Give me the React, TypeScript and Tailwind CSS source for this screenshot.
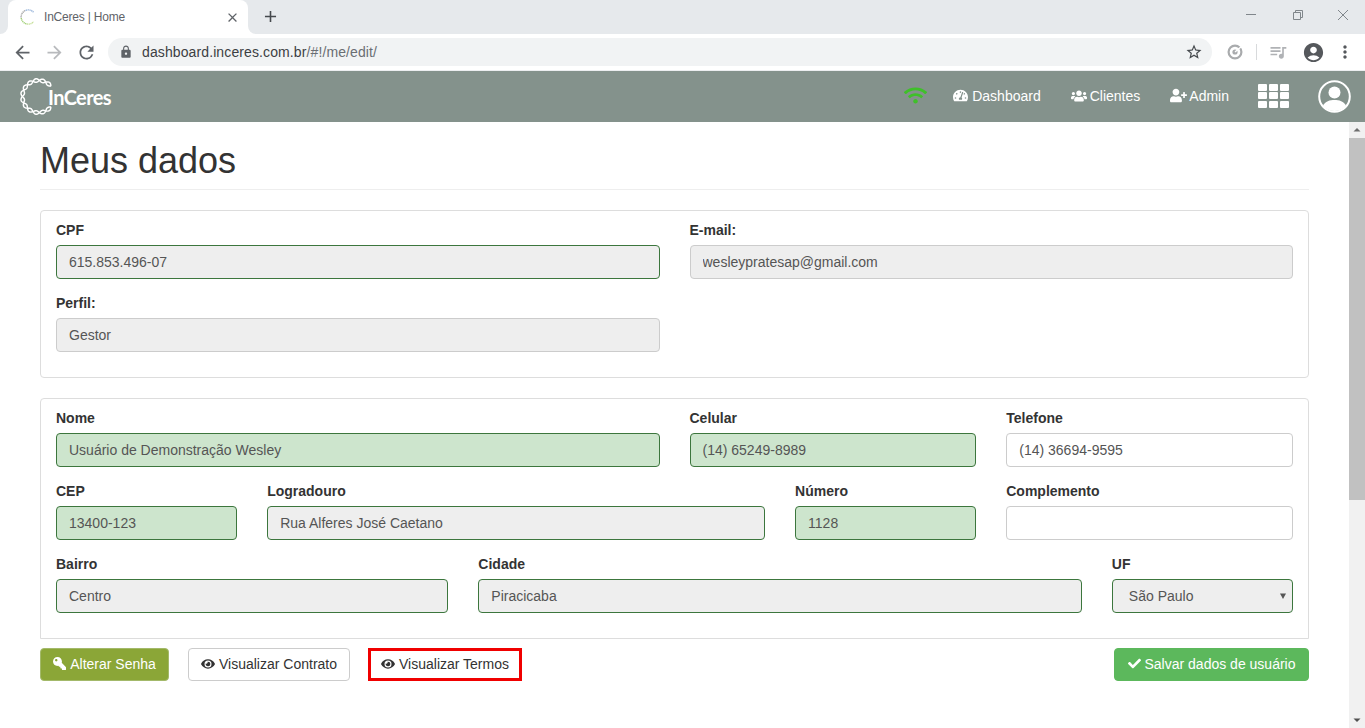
import type { ReactNode } from "react";
import { FaCheck, FaEye, FaKey, FaTachometerAlt, FaUserPlus, FaUsers, FaWifi } from "react-icons/fa";
import {
  MdAccountCircle,
  MdAdd,
  MdArrowBack,
  MdArrowForward,
  MdClose,
  MdLock,
  MdMoreVert,
  MdQueueMusic,
  MdRefresh,
  MdStarBorder,
} from "react-icons/md";

type Variant = "valid" | "validFilled" | "readonly" | "plain";

const inputStyles: Record<Variant, string> = {
  valid: "bg-[#eeeeee] border-[#3c763d]",
  validFilled: "bg-[#cde5cd] border-[#3c763d]",
  readonly: "bg-[#eeeeee] border-[#cccccc]",
  plain: "bg-white border-[#cccccc]",
};

// twisted rope ring of the logo: two sine waves running round an open circle
function ropePath(cx: number, cy: number, r: number, amp: number, phase: number) {
  const points: string[] = [];
  for (let i = 0; i <= 120; i++) {
    const a = ((40 + (280 * i) / 120) * Math.PI) / 180;
    const rr = r + amp * Math.sin((i / 120) * Math.PI * 12 + phase);
    points.push(`${(cx + rr * Math.cos(a)).toFixed(2)} ${(cy - rr * Math.sin(a)).toFixed(2)}`);
  }
  return "M" + points.join("L");
}

function Field({ label, value, variant, span }: { label: string; value: string; variant: Variant; span: string }) {
  return (
    <div className={`${span} mb-[14px]`}>
      <label className="block text-sm leading-5 font-bold text-[#333333] mb-[5px]">{label}</label>
      <input
        readOnly
        value={value}
        className={`block w-full h-[34px] px-3 rounded border text-sm text-[#555555] outline-none ${inputStyles[variant]}`}
      />
    </div>
  );
}

function NavLink({ icon, label, className }: { icon: ReactNode; label: string; className: string }) {
  return (
    <a className={`flex items-center text-sm text-white mt-[-2px] ${className}`}>
      <span className="w-[19px] shrink-0">{icon}</span>
      {label}
    </a>
  );
}

function BrowserChrome() {
  return (
    <div className="bg-white">
      <div className="h-[34px] bg-[#e6e9ec] flex items-end">
        <div className="relative ml-2 w-[240px] h-[34px] bg-white rounded-t-lg flex items-center">
          <div className="absolute bottom-0 -left-2 w-2 h-2 bg-white">
            <div className="w-2 h-2 bg-[#e6e9ec] rounded-br-lg" />
          </div>
          <div className="absolute bottom-0 -right-2 w-2 h-2 bg-white">
            <div className="w-2 h-2 bg-[#e6e9ec] rounded-bl-lg" />
          </div>
          <svg
            viewBox="0 0 18 18"
            className="ml-[11px] w-[18px] h-[18px]"
            fill="none"
            strokeWidth="1.4"
            strokeDasharray="1.2 0.5"
          >
            <path d="M14.5 4.2A7 7 0 0 0 6 2.7" stroke="#9db8dc" />
            <path d="M6 2.7A7 7 0 0 0 2.2 10" stroke="#a8a8a8" />
            <path d="M2.2 10A7 7 0 0 0 8 16" stroke="#9fce74" />
            <path d="M8 16A7 7 0 0 0 14.5 13.8" stroke="#c6e09a" />
          </svg>
          <span className="ml-[7px] text-xs tracking-[-0.2px] text-[#5f6368] flex-1">InCeres | Home</span>
          <MdClose className="mr-[8px] text-[#5f6368]" size={15} />
        </div>
        <MdAdd className="ml-[13px] mb-[8px] text-[#45494d]" size={19} />
        <div className="flex-1" />
        <div className="self-start mt-[9px] flex items-start text-[#80868b]">
          <svg viewBox="0 0 12 12" className="w-3 h-3 mr-[35px]" stroke="currentColor" fill="none">
            <path d="M1 5.5H11" />
          </svg>
          <svg viewBox="0 0 12 12" className="w-3 h-3 mr-[33px]" stroke="currentColor" fill="none">
            <path d="M1.5 3.5H8.5V10.5H1.5ZM3.5 3.5V1.5H10.5V8.5H8.5" />
          </svg>
          <svg viewBox="0 0 12 12" className="w-3 h-3 mr-[16px]" stroke="currentColor" fill="none">
            <path d="M1 1L11 11M11 1L1 11" />
          </svg>
        </div>
      </div>
      <div className="h-[37px] flex items-center border-b border-[#eceef0]">
        <MdArrowBack className="ml-[12px] text-[#5f6368]" size={21} />
        <MdArrowForward className="ml-[11px] text-[#b8babd]" size={21} />
        <MdRefresh className="ml-[11px] text-[#5f6368]" size={21} />
        <div className="ml-[11px] w-[1104px] h-[28px] rounded-full bg-[#f1f3f4] flex items-center">
          <MdLock className="ml-[11px] text-[#5f6368]" size={14} />
          <span className="ml-[9px] text-sm tracking-[0.11px] text-[#3c4043] flex-1">
            dashboard.inceres.com.br<span className="text-[#6a6e73]">/#!/me/edit/</span>
          </span>
          <MdStarBorder className="mr-[9px] text-[#45494d]" size={18} />
        </div>
        <svg viewBox="0 0 16 16" className="ml-[15px] w-4 h-4" fill="none">
          <circle cx="8" cy="8" r="6.4" stroke="#a9abad" strokeWidth="2.2" />
          <circle cx="8" cy="8" r="2.6" fill="#a9abad" />
          <path d="M8 8L15 2" stroke="#ffffff" strokeWidth="1.4" />
        </svg>
        <div className="ml-[13px] w-px h-[16px] bg-[#d8dadc]" />
        <MdQueueMusic className="ml-[11px] text-[#b0b2b5]" size={20} />
        <MdAccountCircle className="ml-[14px] text-[#55585c]" size={23} />
        <MdMoreVert className="ml-[10px] text-[#55585c]" size={20} />
      </div>
    </div>
  );
}

function TopNav() {
  return (
    <nav className="h-[51px] bg-[#84928c] flex items-center">
      <div className="ml-[19px] flex items-center">
        <svg viewBox="0 0 40 40" className="w-[39px] h-[39px]" fill="none" stroke="#ffffff" strokeWidth="1.5">
          <path d={ropePath(20, 20, 16.5, 1.8, 0)} />
          <path d={ropePath(20, 20, 16.5, 1.8, Math.PI)} />
        </svg>
        <span className="-ml-[10px] text-[20px] leading-none font-bold text-white font-['Lato',sans-serif] tracking-[-0.6px]">
          InCeres
        </span>
      </div>
      <div className="flex-1" />
      <FaWifi className="text-[#3fc02a] mt-[-2px]" size={23} />
      <NavLink className="ml-[26px]" icon={<FaTachometerAlt size={15} />} label="Dashboard" />
      <NavLink className="ml-[30px]" icon={<FaUsers size={16} />} label="Clientes" />
      <NavLink className="ml-[30px]" icon={<FaUserPlus size={17} />} label="Admin" />
      <div className="ml-[29px] mt-[-2px] grid grid-cols-3 gap-[1.5px] w-[31px]">
        {Array.from({ length: 9 }).map((_, i) => (
          <div key={i} className="h-[7px] bg-white rounded-[1px]" />
        ))}
      </div>
      <svg viewBox="0 0 33 33" className="ml-[29px] mr-[14px] w-[33px] h-[33px]" fill="none">
        <circle cx="16.5" cy="16.5" r="15.3" stroke="#ffffff" strokeWidth="2" />
        <circle cx="16.5" cy="12.5" r="6" fill="#ffffff" />
        <path d="M5 26C7 21 12 20 16.5 20C21 20 26 21 28 26C25 29.5 21 31 16.5 31C12 31 8 29.5 5 26Z" fill="#ffffff" />
      </svg>
    </nav>
  );
}

function ActionButton({ className, icon, label }: { className: string; icon: ReactNode; label: string }) {
  return (
    <button className={`flex items-center gap-[4px] h-[33px] pb-[2px] rounded border text-sm ${className}`}>
      {icon}
      {label}
    </button>
  );
}

export default function App() {
  return (
    <div className="w-[1365px] h-[728px] overflow-hidden flex flex-col bg-white font-['Liberation_Sans',Arial,sans-serif]">
      <BrowserChrome />
      <TopNav />
      <div className="flex flex-1 min-h-0">
        <main className="flex-1 px-10">
          <div className="h-[68px] border-b border-[#eeeeee] flex items-center">
            <h1 className="mt-[10px] text-[36px] leading-[40px] font-normal text-[#333333]">Meus dados</h1>
          </div>

          <section className="mt-5 border border-[#dddddd] rounded px-[15px] pt-[9px] h-[168px]">
            <div className="grid grid-cols-12 gap-x-[30px]">
              <Field span="col-span-6" label="CPF" value="615.853.496-07" variant="valid" />
              <Field span="col-span-6" label="E-mail:" value="wesleypratesap@gmail.com" variant="readonly" />
              <Field span="col-span-6" label="Perfil:" value="Gestor" variant="readonly" />
            </div>
          </section>

          <section className="mt-5 border border-[#dddddd] rounded-t px-[15px] pt-[9px] h-[241px]">
            <div className="grid grid-cols-12 gap-x-[30px]">
              <Field span="col-span-6" label="Nome" value="Usuário de Demonstração Wesley" variant="validFilled" />
              <Field span="col-span-3" label="Celular" value="(14) 65249-8989" variant="validFilled" />
              <Field span="col-span-3" label="Telefone" value="(14) 36694-9595" variant="plain" />
              <Field span="col-span-2" label="CEP" value="13400-123" variant="validFilled" />
              <Field span="col-span-5" label="Logradouro" value="Rua Alferes José Caetano" variant="valid" />
              <Field span="col-span-2" label="Número" value="1128" variant="validFilled" />
              <Field span="col-span-3" label="Complemento" value="" variant="plain" />
              <Field span="col-span-4" label="Bairro" value="Centro" variant="valid" />
              <Field span="col-span-6" label="Cidade" value="Piracicaba" variant="valid" />
              <div className="col-span-2">
                <label className="block text-sm leading-5 font-bold text-[#333333] mb-[5px]">UF</label>
                <div className="flex items-center justify-between h-[34px] pl-4 pr-[5px] rounded border bg-[#eeeeee] border-[#3c763d] text-sm text-[#555555]">
                  São Paulo
                  <svg viewBox="0 0 8 8" className="w-2 h-2" fill="#555555">
                    <path d="M1 1.5H7L4 7Z" />
                  </svg>
                </div>
              </div>
            </div>
          </section>

          <div className="mt-[9px] flex items-center">
            <ActionButton
              className="w-[129px] justify-center bg-[#8ba637] border-[#a3b96a] text-white"
              icon={<FaKey size={13} className="scale-x-[-1]" />}
              label="Alterar Senha"
            />
            <ActionButton
              className="ml-[19px] w-[162px] justify-center bg-white border-[#cccccc] text-[#333333]"
              icon={<FaEye size={14} />}
              label="Visualizar Contrato"
            />
            <ActionButton
              className="ml-[18px] w-[154px] justify-center bg-white border-[#cccccc] text-[#333333] outline-[3px] outline-offset-[-3px] outline-[#f00000] rounded-none"
              icon={<FaEye size={14} />}
              label="Visualizar Termos"
            />
            <div className="flex-1" />
            <ActionButton
              className="w-[195px] justify-center bg-[#5cb85c] border-[#5cb85c] text-white"
              icon={<FaCheck size={13} />}
              label="Salvar dados de usuário"
            />
          </div>
        </main>

        <div className="w-4 bg-[#f1f1f1] flex flex-col items-center">
          <svg viewBox="0 0 16 16" className="w-4 h-4 shrink-0" fill="#6e6e6e">
            <path d="M4.5 9.5H11.5L8 6Z" />
          </svg>
          <div className="w-full h-[362px] bg-[#c1c1c1]" />
          <div className="flex-1" />
          <svg viewBox="0 0 16 16" className="w-4 h-4 shrink-0" fill="#505050">
            <path d="M4.5 6.5H11.5L8 10Z" />
          </svg>
        </div>
      </div>
    </div>
  );
}
